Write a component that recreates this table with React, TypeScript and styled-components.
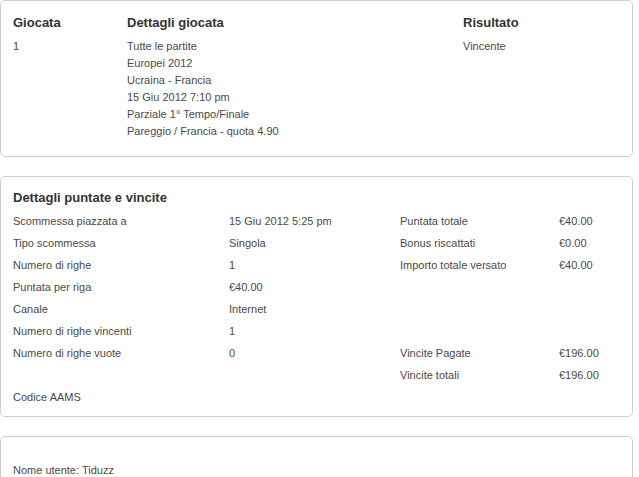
import styled, { createGlobalStyle } from 'styled-components';

const GlobalStyle = createGlobalStyle`
	body {
		margin: 0;
		background: #fff;
		font-family: "Liberation Sans", Arial, sans-serif;
		color: #4a4a4a;
	}
`;

const Page = styled.div`
	width: 633px;
	display: flex;
	flex-direction: column;
	gap: 19px;
`;

const Card = styled.section<{ $height?: number }>`
	box-sizing: border-box;
	height: ${(p) => (p.$height ? `${p.$height}px` : 'auto')};
	border: 1px solid #cfcfcf;
	border-radius: 5px;
	background: #fff;
	padding: 0 12px;
`;

const Title = styled.h3`
	margin: 0;
	font-size: 13px;
	font-weight: bold;
	color: #333;
`;

// top card: Giocata / Dettagli / Risultato
const BetGrid = styled.div`
	display: grid;
	grid-template-columns: 114px 336px 1fr;
	padding-top: 13px;
`;

const HeadCell = styled(Title)`
	line-height: 17px;
	margin-bottom: 7px;
`;

const Cell = styled.div`
	font-size: 11px;
	line-height: 17px;
	white-space: nowrap;
`;

// stakes and winnings card
const StakeTitle = styled(Title)`
	line-height: 20px;
	padding-top: 11px;
	margin-bottom: 2px;
`;

const StakeGrid = styled.div`
	display: grid;
	grid-template-columns: 216px 171px 159px 1fr;
	grid-auto-rows: 22px;
	align-items: center;
`;

const UserLine = styled.div`
	padding: 25px 0 0;
	font-size: 11px;
	line-height: 16px;
`;

const details = [
	'Tutte le partite',
	'Europei 2012',
	'Ucraina - Francia',
	'15 Giu 2012 7:10 pm',
	'Parziale 1° Tempo/Finale',
	'Pareggio / Francia - quota 4.90',
];

const stakes: string[][] = [
	['Scommessa piazzata a', '15 Giu 2012 5:25 pm', 'Puntata totale', '€40.00'],
	['Tipo scommessa', 'Singola', 'Bonus riscattati', '€0.00'],
	['Numero di righe', '1', 'Importo totale versato', '€40.00'],
	['Puntata per riga', '€40.00', '', ''],
	['Canale', 'Internet', '', ''],
	['Numero di righe vincenti', '1', '', ''],
	['Numero di righe vuote', '0', 'Vincite Pagate', '€196.00'],
	['', '', 'Vincite totali', '€196.00'],
	['Codice AAMS', '', '', ''],
];

export default function App() {
	return (
		<>
			<GlobalStyle />
			<Page>
				<Card $height={157}>
					<BetGrid>
						<HeadCell>Giocata</HeadCell>
						<HeadCell>Dettagli giocata</HeadCell>
						<HeadCell>Risultato</HeadCell>
						<Cell>1</Cell>
						<div>
							{details.map((d) => (
								<Cell key={d}>{d}</Cell>
							))}
						</div>
						<Cell>Vincente</Cell>
					</BetGrid>
				</Card>

				<Card $height={241}>
					<StakeTitle>Dettagli puntate e vincite</StakeTitle>
					<StakeGrid>
						{stakes.map((row, i) =>
							row.map((c, j) => <Cell key={`${i}-${j}`}>{c}</Cell>)
						)}
					</StakeGrid>
				</Card>

				<Card $height={60}>
					<UserLine>Nome utente: Tiduzz</UserLine>
				</Card>
			</Page>
		</>
	);
}
